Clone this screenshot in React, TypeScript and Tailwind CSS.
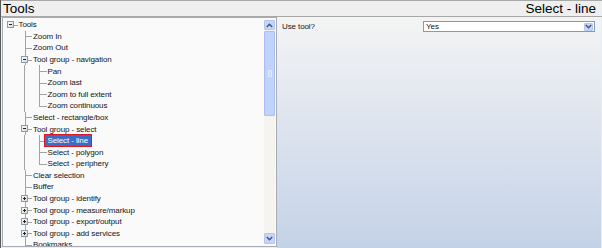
import React from "react";

type Row = {
  level: number;
  text: string;
  exp?: "minus" | "plus";
  last?: boolean;
  selected?: boolean;
};

const rows: Row[] = [
  { level: 0, text: "Tools", exp: "minus" },
  { level: 1, text: "Zoom In" },
  { level: 1, text: "Zoom Out" },
  { level: 1, text: "Tool group - navigation", exp: "minus" },
  { level: 2, text: "Pan" },
  { level: 2, text: "Zoom last" },
  { level: 2, text: "Zoom to full extent" },
  { level: 2, text: "Zoom continuous", last: true },
  { level: 1, text: "Select - rectangle/box" },
  { level: 1, text: "Tool group - select", exp: "minus" },
  { level: 2, text: "Select - line", selected: true },
  { level: 2, text: "Select - polygon" },
  { level: 2, text: "Select - periphery", last: true },
  { level: 1, text: "Clear selection" },
  { level: 1, text: "Buffer" },
  { level: 1, text: "Tool group - identify", exp: "plus" },
  { level: 1, text: "Tool group - measure/markup", exp: "plus" },
  { level: 1, text: "Tool group - export/output", exp: "plus" },
  { level: 1, text: "Tool group - add services", exp: "plus" },
  { level: 1, text: "Bookmarks" },
];

function ExpBox({ kind }: { kind: "minus" | "plus" }) {
  return (
    <svg width="7" height="7" viewBox="0 0 7 7" className="relative z-10 block">
      <defs>
        <linearGradient id={`g-${kind}`} x1="0" y1="0" x2="1" y2="1">
          <stop offset="0" stopColor="#ffffff" />
          <stop offset="1" stopColor="#d6d6cf" />
        </linearGradient>
      </defs>
      <rect x="0.5" y="0.5" width="6" height="6" fill={`url(#g-${kind})`} stroke="#8a9ab0" strokeWidth="1" />
      <line x1="2" y1="3.5" x2="5" y2="3.5" stroke="#222" strokeWidth="1" />
      {kind === "plus" && <line x1="3.5" y1="2" x2="3.5" y2="5" stroke="#222" strokeWidth="1" />}
    </svg>
  );
}

function TreeRow({ row }: { row: Row }) {
  const cells: React.ReactNode[] = [];
  for (let i = 0; i < row.level; i++) {
    cells.push(
      <div key={i} className="relative w-[14.5px] h-full shrink-0 flex justify-center">
        {i >= 1 && <div className="w-px h-full bg-[#a3a3a3]" />}
      </div>
    );
  }
  const isRoot = row.level === 0;
  return (
    <div className="flex items-center h-[11.58px]">
      {cells}
      <div className="relative w-[14.5px] h-full shrink-0 flex items-center justify-center">
        {!isRoot && (
          <div
            className={`absolute left-[7px] top-0 w-px bg-[#a3a3a3] ${row.last ? "h-1/2" : "h-full"}`}
          />
        )}
        <div className="absolute left-[7px] right-0 top-1/2 h-px bg-[#a3a3a3]" />
        {row.exp && <ExpBox kind={row.exp} />}
      </div>
      <span
        className={`relative z-10 ml-[-3px] px-[3px] h-[13px] leading-[11px] border whitespace-nowrap ${
          row.selected
            ? "bg-[#3a6cc8] border-[#e3161c] text-white"
            : "border-transparent text-[#141414]"
        }`}
      >
        {row.text}
      </span>
    </div>
  );
}

function Chevron({ up, color = "#3f5585" }: { up?: boolean; color?: string }) {
  return (
    <svg width="7" height="5" viewBox="0 0 7 5" className="block">
      <path
        d={up ? "M0.8 4 L3.5 1.3 L6.2 4" : "M0.8 1 L3.5 3.7 L6.2 1"}
        fill="none"
        stroke={color}
        strokeWidth="1.5"
      />
    </svg>
  );
}

function ScrollBar() {
  return (
    <div className="w-[11px] mr-[1px] my-[2px] flex flex-col bg-[#f5f4ef]">
      <div className="h-[10px] shrink-0 rounded-[1px] border border-[#b5c6ee] bg-[#c6d5f8] flex items-center justify-center">
        <Chevron up />
      </div>
      <div className="mt-px h-[85px] shrink-0 rounded-[1px] border border-[#aabff0] bg-[#c2d3fb] flex items-center justify-center">
        <div className="w-[4px] h-[7px] border border-[#dfe8fd] bg-[#cbdafc]" />
      </div>
      <div className="flex-1" />
      <div className="h-[11px] shrink-0 rounded-[1px] border border-[#b5c6ee] bg-[#c6d5f8] flex items-center justify-center">
        <Chevron />
      </div>
    </div>
  );
}

export default function App() {
  return (
    <div
      className="w-[602px] h-[248px] flex flex-col bg-[#efefef] border-l border-[#5a5a5a] overflow-hidden"
      style={{ fontFamily: '"Liberation Sans", Arial, sans-serif' }}
    >
      <div className="h-[17px] shrink-0 flex items-start justify-between border-t border-b border-[#a8a8a8] bg-[#efefef] pl-[2px] pr-[6px] text-[13.5px] leading-[16px] text-black">
        <span>Tools</span>
        <span>Select - line</span>
      </div>
      <div className="flex flex-1 min-h-0">
        <div className="pl-px pb-px shrink-0">
          <div className="w-[275px] h-[230px] border border-[#a5acb5] bg-[#fafafa] flex">
            <div className="flex-1 overflow-hidden pt-px text-[8px] tracking-[-0.1px]">
              {rows.map((r, i) => (
                <TreeRow key={i} row={r} />
              ))}
            </div>
            <ScrollBar />
          </div>
        </div>
        <div className="flex-1 bg-gradient-to-b from-[#f4f4f4] to-[#c4d2e7] border-r border-[#e8edf4] pt-[4px] pl-[5px] pr-[6px] text-[8px] text-[#141414]">
          <div className="flex items-center justify-between h-[11px]">
            <span className="tracking-[-0.1px]">Use tool?</span>
            <div className="w-[172px] h-[11px] border border-[#7f9db9] bg-white flex items-center justify-between pl-[2px] pr-px">
              <span className="leading-[9px]">Yes</span>
              <div className="w-[9px] h-[8px] rounded-[1px] bg-[#c6d5f8] border border-[#b5c6ee] flex items-center justify-center">
                <Chevron />
              </div>
            </div>
          </div>
        </div>
      </div>
    </div>
  );
}
